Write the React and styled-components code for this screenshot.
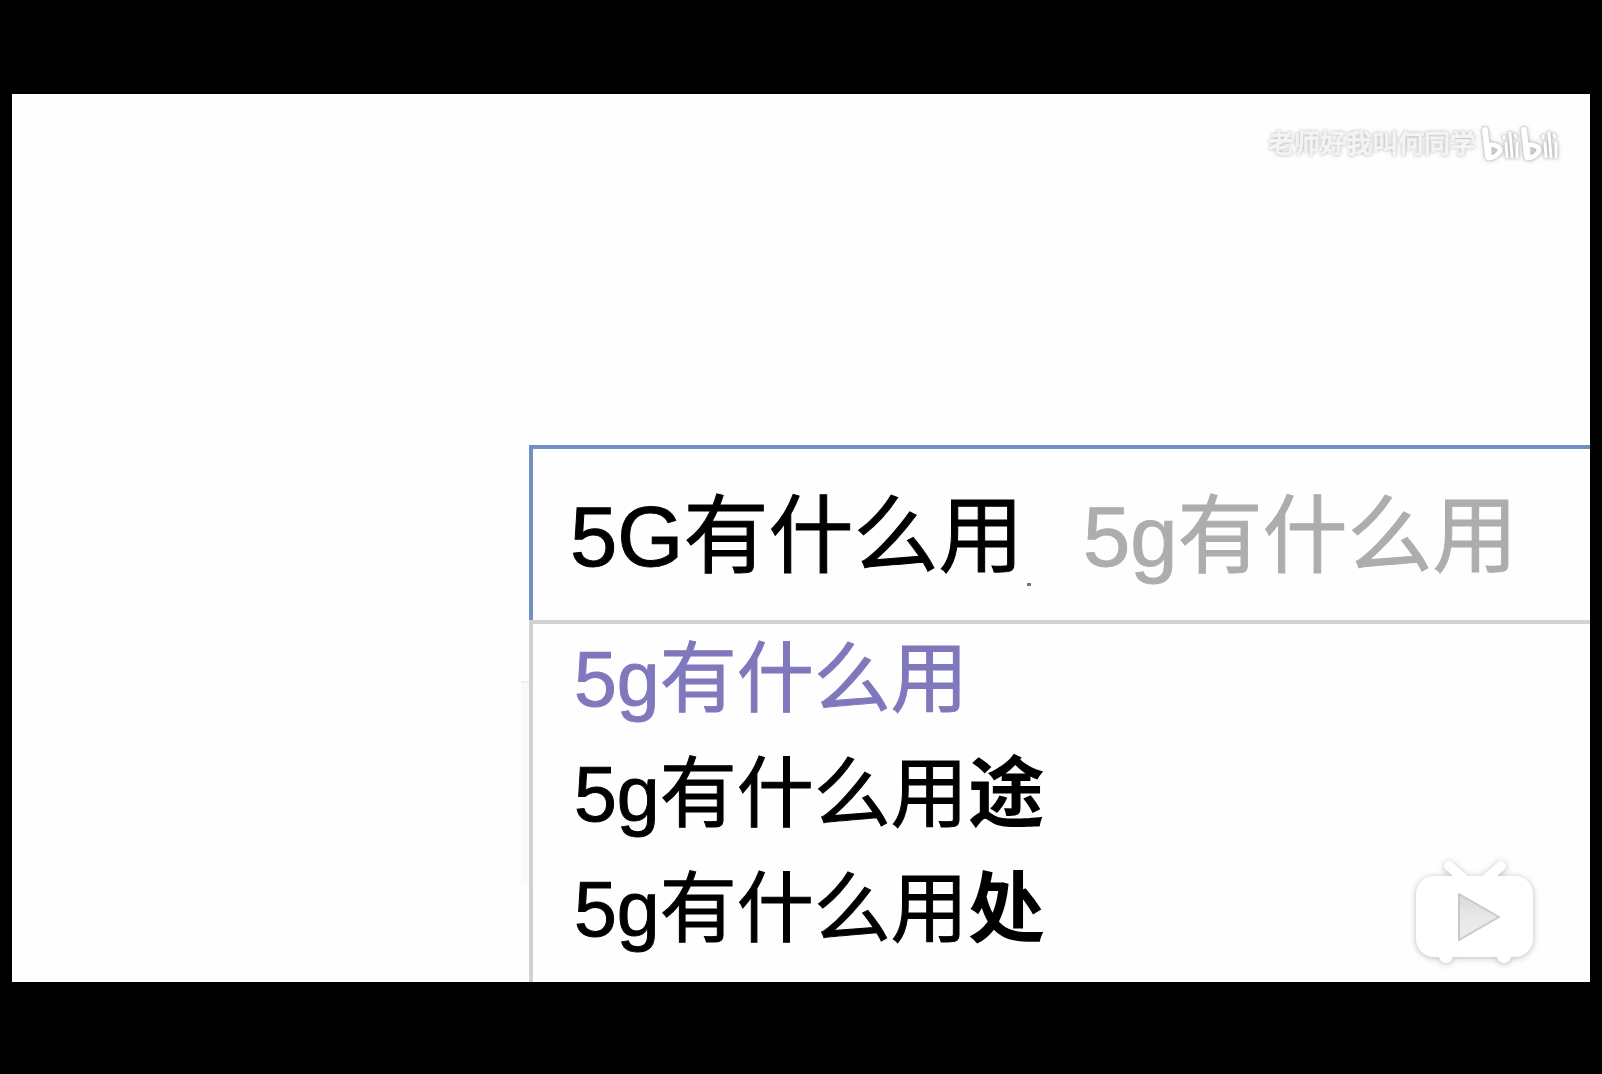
import React, { useState } from "react";
import styled, { createGlobalStyle } from "styled-components";

const GlobalStyle = createGlobalStyle`
  *, *::before, *::after { box-sizing: border-box; }
  html, body, #root { height: 100%; }
  body {
    margin: 0;
    background: #000;
    font-family: "Liberation Sans", "Noto Sans CJK SC", sans-serif;
  }
`;

const Player = styled.main`
  display: flex;
  min-height: 100%;
  padding: 94px 12px 92px;
  background: #000;
`;

const Frame = styled.section`
  position: relative;
  flex: 1;
  display: flex;
  flex-direction: column;
  overflow: hidden;
  background: #fefefe;
`;

const Watermark = styled.header`
  display: flex;
  justify-content: flex-end;
  align-items: center;
  gap: 4px;
  height: 100px;
  padding-right: 28px;
`;

const Author = styled.span`
  font-size: 26px;
  font-weight: 500;
  line-height: 32px;
  color: #f4f4f4;
  -webkit-text-stroke: 1px #f4f4f4;
  text-shadow: 0 0 2px #999, 0 0 4px #bbb;
`;

const Logo = styled.svg`
  display: block;
  filter: drop-shadow(0 0 1px #aaa) drop-shadow(0 0 2px #ccc);
`;

const SearchPanel = styled.form`
  position: relative;
  flex: 1;
  display: flex;
  flex-direction: column;
  margin: 251px 0 0 517px;
`;

const EdgeShade = styled.span`
  position: absolute;
  top: 236px;
  left: -8px;
  width: 8px;
  height: 202px;
  border-top: 2px solid #eee;
  background: #fafafa;
`;

const SearchBox = styled.div`
  display: flex;
  align-items: center;
  height: 175px;
  padding: 4px 0 0 37px;
  border-top: 4px solid #7390c4;
  border-left: 4px solid #7390c4;
  font-size: 85px;
  line-height: 120px;
`;

const Query = styled.input`
  width: 457px;
  height: 120px;
  padding: 0;
  border: 0;
  outline: 0;
  background: transparent;
  color: #000;
  font: inherit;
  -webkit-text-stroke: 1px #000;
`;

const Caret = styled.span`
  align-self: flex-end;
  width: 4px;
  height: 3px;
  margin-bottom: 34px;
  background: #777;
`;

const Completion = styled.span`
  margin-left: 52px;
  color: #adadad;
  -webkit-text-stroke: 1px #adadad;
  white-space: nowrap;
`;

const Suggestions = styled.ul`
  flex: 1;
  display: flex;
  flex-direction: column;
  gap: 4px;
  margin: 0;
  padding: 0 0 0 41px;
  border-top: 4px solid #d2d2d2;
  border-left: 4px solid #d2d2d2;
  list-style: none;
`;

const Suggestion = styled.a`
  display: block;
  font-size: 77px;
  line-height: 111px;
  white-space: nowrap;
  text-decoration: none;
  color: ${(p) => (p.$visited ? "#8078bc" : "#000")};
  -webkit-text-stroke: 1px currentColor;
`;

const Emphasis = styled.b`
  -webkit-text-stroke: 0;
`;

const TvBadge = styled.button`
  position: absolute;
  right: 48px;
  bottom: 13px;
  padding: 0;
  border: 0;
  background: transparent;

  svg {
    display: block;
    filter: drop-shadow(0 1px 3px #bbb);
  }
`;

const suggestions = [
  { text: "5g有什么用", extra: "", visited: true },
  { text: "5g有什么用", extra: "途" },
  { text: "5g有什么用", extra: "处" },
];

function BilibiliLogo() {
  return (
    <Logo width="82" height="38" viewBox="0 0 82 38" role="img" aria-label="bilibili">
      {[0, 39].map((x) => (
        <g key={x} transform={`translate(${x} 0)`} fill="none" stroke="#fff" strokeLinecap="round" strokeLinejoin="round">
          <path d="M5 5 L8 32" strokeWidth="6" />
          <path d="M9 20 C15 19 21 22 20 26 C18 30 13 33 9 33 Z" strokeWidth="5" />
          <path d="M26 18 L27 32 M30 8 L32 32 M37 18 L37 32" strokeWidth="3" />
          <path d="M24 11 L24 13 M35 10 L36 12" strokeWidth="3" />
          <path d="M12 24 L16 26 L12 29 Z" fill="#ccc" stroke="none" />
        </g>
      ))}
    </Logo>
  );
}

function TvIcon() {
  return (
    <svg width="130" height="112" viewBox="0 0 130 112" aria-hidden="true">
      <defs>
        <linearGradient id="play-fill" x1="0" y1="0" x2="0" y2="1">
          <stop offset="0" stopColor="#d8d8d8" />
          <stop offset="0.5" stopColor="#e8e8e8" />
          <stop offset="1" stopColor="#ededed" />
        </linearGradient>
      </defs>
      <path d="M37 9 L53 23 M89 9 L73 23" stroke="#fff" strokeWidth="10" strokeLinecap="round" />
      <rect x="4" y="19" width="117" height="81" rx="18" fill="#fff" />
      <circle cx="34" cy="99" r="7" fill="#fff" />
      <circle cx="92" cy="99" r="7" fill="#fff" />
      <path d="M47 37 L87 60 L47 83 Z" fill="url(#play-fill)" stroke="#c8c8c8" strokeWidth="2" strokeLinejoin="round" />
    </svg>
  );
}

export default function App() {
  const [query, setQuery] = useState("5G有什么用");
  return (
    <>
      <GlobalStyle />
      <Player>
        <Frame>
          <Watermark>
            <Author>老师好我叫何同学</Author>
            <BilibiliLogo />
          </Watermark>
          <SearchPanel onSubmit={(e) => e.preventDefault()}>
            <EdgeShade />
            <SearchBox>
              <Query aria-label="搜索" value={query} onChange={(e) => setQuery(e.target.value)} />
              <Caret />
              <Completion>5g有什么用</Completion>
            </SearchBox>
            <Suggestions>
              {suggestions.map((s) => (
                <li key={s.text + s.extra}>
                  <Suggestion href="#" $visited={s.visited}>
                    {s.text}
                    {s.extra && <Emphasis>{s.extra}</Emphasis>}
                  </Suggestion>
                </li>
              ))}
            </Suggestions>
          </SearchPanel>
          <TvBadge type="button" aria-label="播放">
            <TvIcon />
          </TvBadge>
        </Frame>
      </Player>
    </>
  );
}
